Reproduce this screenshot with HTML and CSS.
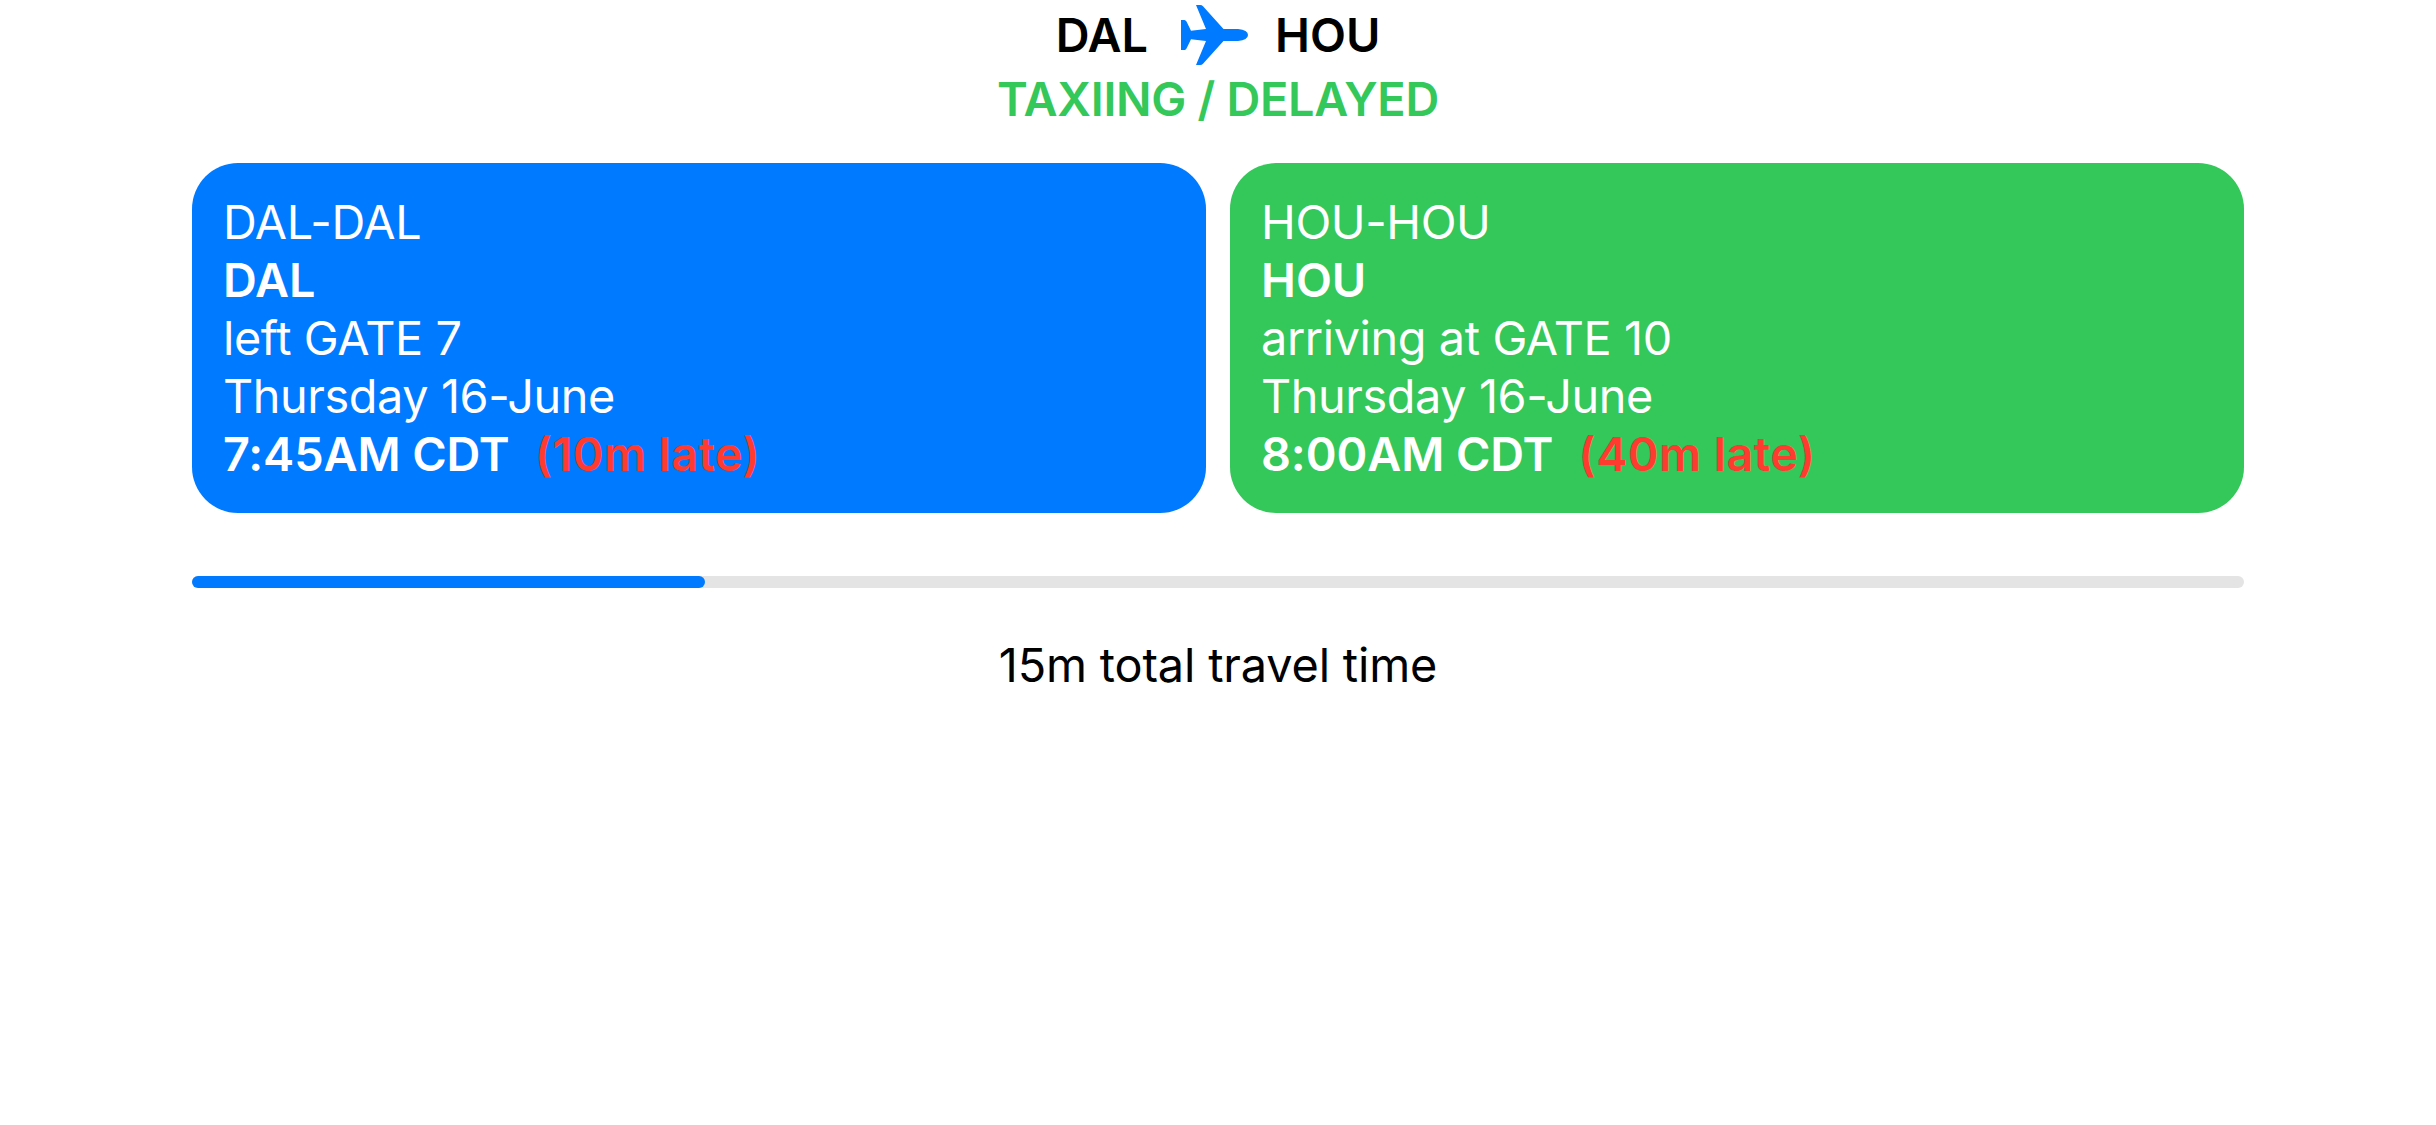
FILE: index.html
```html
<!DOCTYPE html>
<html lang="en">
<head>
<meta charset="utf-8">
<title>DAL to HOU</title>
<link rel="stylesheet" href="styles.css">
</head>
<body>
<main class="flight">
  <header class="route">
    <span class="code">DAL</span>
    <svg class="plane" viewBox="0 0 67 60" aria-hidden="true"><path d="M0 15H3.5Q4.5 15 5.5 16.5L10 25.8L25 24L15 0H19Q21 0 22 1.2L42.5 24H57Q67 25 67 30Q67 35 57 36H42.5L22 58.8Q21 60 19 60H15L25 36L10 34.2L5.5 43.5Q4.5 45 3.5 45H0Z"/></svg>
    <span class="code">HOU</span>
  </header>
  <p class="status">TAXIING / DELAYED</p>
  <div class="cards">
    <section class="card departure">
      <p class="name">DAL-DAL</p>
      <p class="strong">DAL</p>
      <p class="gate">left GATE 7</p>
      <p class="date">Thursday 16-June</p>
      <p class="strong time"><span>7:45AM CDT</span><span class="late">(10m late)</span></p>
    </section>
    <section class="card arrival">
      <p class="name">HOU-HOU</p>
      <p class="strong">HOU</p>
      <p class="gate">arriving at GATE 10</p>
      <p class="date">Thursday 16-June</p>
      <p class="strong time"><span>8:00AM CDT</span><span class="late">(40m late)</span></p>
    </section>
  </div>
  <div class="progress"><div class="bar" style="width:25%"></div></div>
  <p class="total">15m total travel time</p>
</main>
</body>
</html>
```
FILE: styles.css
```css
* { box-sizing: border-box; }
body {
  margin: 0;
  background: #fff;
  color: #000;
  font: 400 46.8px/58px Inter, "Liberation Sans", sans-serif;
}
p { margin: 0; white-space: nowrap; }
.flight {
  display: flex;
  flex-direction: column;
  padding: 5px 192px 0;
}
.route {
  display: flex;
  justify-content: center;
  height: 60px;
  gap: 27px;
  font-weight: 600;
}
.code { padding-top: 1px; }
.plane { width: 67px; height: 60px; margin-left: 6px; fill: #007aff; }
.status {
  margin-top: 5px;
  text-align: center;
  font-weight: 600;
  letter-spacing: -0.3px;
  color: #34c759;
}
.cards {
  display: grid;
  grid-template-columns: 1fr 1fr;
  gap: 24px;
  margin-top: 35px;
}
.card {
  height: 350px;
  padding: 30px 30px 30px 31px;
  border-radius: 46px;
  color: #fff;
}
.departure { background: #007aff; }
.arrival { background: #34c759; }
.name { letter-spacing: -0.4px; }
.gate, .date { letter-spacing: -0.4px; }
.strong { font-weight: 600; }
.time { display: flex; gap: 25px; letter-spacing: -0.1px; }
.late { color: #ff3b30; letter-spacing: 0.4px; }
.progress {
  height: 12px;
  margin-top: 63px;
  border-radius: 6px;
  background: #e4e4e4;
}
.bar { height: 12px; border-radius: 6px; background: #007aff; }
.total { margin-top: 48px; text-align: center; letter-spacing: -0.15px; }
```
